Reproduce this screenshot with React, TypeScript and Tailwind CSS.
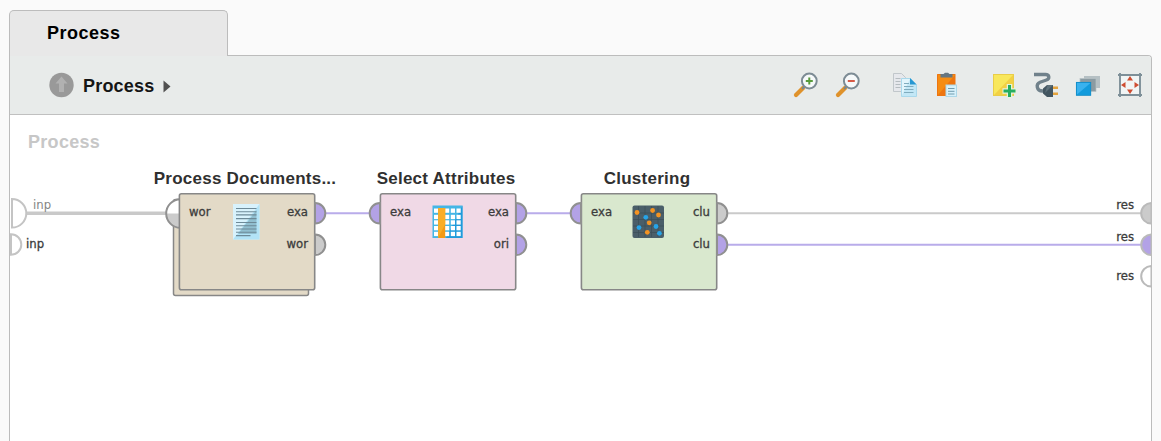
import React from "react";

const VIOLET = "#b3a2e6";
const GRAY = "#cbcbcb";
const EDGE = "#909090";

type PortProps = { x: number; y: number; r?: number; side: "left" | "right"; fill: string; stroke?: string };

function Port({ x, y, r = 10.3, side, fill, stroke = EDGE }: PortProps) {
  const sweep = side === "right" ? 1 : 0;
  return (
    <path
      d={`M${x} ${y - r}A${r} ${r} 0 0 ${sweep} ${x} ${y + r}Z`}
      fill={fill}
      stroke={stroke}
      strokeWidth="2"
    />
  );
}

function PortLabel({ children, muted = false }: { children: React.ReactNode; muted?: boolean }) {
  return (
    <span
      className={`whitespace-nowrap font-['DejaVu_Sans_Condensed','DejaVu_Sans',sans-serif] text-[13px] leading-4 [font-stretch:condensed] ${
        muted ? "text-[#858585]" : "text-[#3c3c3c] [-webkit-text-stroke:0.3px_#3c3c3c]"
      }`}
    >
      {children}
    </span>
  );
}

type OperatorProps = { name: string; inputs: string[]; outputs: string[]; place: string };

function Operator({ name, inputs, outputs, place }: OperatorProps) {
  return (
    <div className={`absolute top-[54px] flex w-[136px] flex-col ${place}`}>
      <h3 className="flex justify-center whitespace-nowrap text-[17px] font-bold leading-5 tracking-[0.25px] text-[#303030]">
        {name}
      </h3>
      <div className="mt-[15px] flex justify-between pl-3 pr-[5px]">
        <div className="flex flex-col gap-4">
          {inputs.map((port, i) => (
            <PortLabel key={i}>{port}</PortLabel>
          ))}
        </div>
        <div className="flex flex-col items-end gap-4">
          {outputs.map((port, i) => (
            <PortLabel key={i}>{port}</PortLabel>
          ))}
        </div>
      </div>
    </div>
  );
}

function ZoomIcon({ plus }: { plus: boolean }) {
  return (
    <svg width="26" height="26" viewBox="0 0 26 26">
      <path d="M3 23L10 16" stroke="#df922b" strokeWidth="4.200" strokeLinecap="round" />
      <path d="M9 17L12 14" stroke="#7b878d" strokeWidth="2" />
      <circle cx="16.300" cy="9" r="7.400" fill="#f6f9fa" stroke="#7d8c95" strokeWidth="2" />
      {plus ? (
        <path d="M12.800 9h7M16.300 5.500v7" stroke="#589b3b" strokeWidth="2" />
      ) : (
        <path d="M12.800 9h7" stroke="#d65a46" strokeWidth="2" />
      )}
    </svg>
  );
}

function CopyIcon() {
  return (
    <svg width="26" height="26" viewBox="0 0 26 26">
      <path d="M1.500 1.500h8l4 4v14h-12z" fill="#e6e8ec" stroke="#c1c7cb" />
      <path d="M3.500 6.500h5M3.500 9.500h5M3.500 12.500h5M3.500 15.500h5" stroke="#b5bcc0" />
      <path d="M9.500 6.500h9l6 6v12h-15z" fill="#c2e7f6" />
      <path d="M10 7h8l-8 16z" fill="#e2f5fc" />
      <path d="M9.500 6.500h9l6 6v12h-15z" fill="none" stroke="#a9d8eb" />
      <path d="M18 6l6.500 6.500H18z" fill="#2697d2" />
      <path d="M12 11.500h5M12 14.500h9.500M12 17.500h9.500M12 20.500h9.500" stroke="#80acbe" strokeWidth="1.200" />
    </svg>
  );
}

function PasteIcon() {
  return (
    <svg width="26" height="26" viewBox="0 0 26 26">
      <rect x="3" y="2" width="18.500" height="22" rx=".5" fill="#ee7510" />
      <path d="M4 3h17L4 23z" fill="#f58c13" />
      <path d="M6.500 2h3l1.500-1.300h3L15.500 2h3v3.500h-12z" fill="#657681" />
      <rect x="12" y="13" width="10.500" height="11.500" fill="#d7f1fb" stroke="#acd7e8" />
      <path d="M14 16.500h6.500M14 19.300h6.500M14 22h6.500" stroke="#719cae" />
    </svg>
  );
}

function NoteIcon() {
  return (
    <svg width="26" height="26" viewBox="0 0 26 26">
      <rect x="2" y="2" width="21" height="22" fill="#f2d044" />
      <path d="M3 3h19L3 23z" fill="#f8e75c" />
      <rect x="2.500" y="2.500" width="20" height="21" fill="none" stroke="#e9cd48" />
      <path d="M18.500 12v14M11.500 19h14" stroke="#e8f2dc" strokeWidth="5.500" />
      <path d="M18.500 13v12M12.500 19h12" stroke="#27ae60" strokeWidth="3" />
    </svg>
  );
}

function PlugIcon() {
  return (
    <svg width="26" height="26" viewBox="0 0 26 26">
      <path
        d="M1 2.500h11.500c4 0 4.500 4.300 1 5.500l-6.500 2.200c-4.500 1.800-3.500 8.800 2.500 8.800h3"
        fill="none"
        stroke="#70818b"
        strokeWidth="3.300"
      />
      <path d="M19 15.700h6M19 21.700h6" stroke="#e5a43d" strokeWidth="2.500" />
      <path d="M10 16.500l4-3.500h6v12h-6l-4-3.500z" fill="#435661" />
      <path d="M14.500 13H20l-8 8z" fill="#5d707a" />
    </svg>
  );
}

function LayersIcon() {
  return (
    <svg width="26" height="26" viewBox="0 0 26 26">
      <rect x="9" y="4" width="16" height="12" fill="#b5c0c4" />
      <rect x="5" y="6.500" width="16" height="13" fill="#8b9ba2" stroke="#b8c2c6" strokeWidth=".7" />
      <rect x="1" y="10" width="15" height="13.500" fill="#129bdc" />
      <path d="M2 11h13.500L2 22.500z" fill="#39b2ee" />
      <rect x="1.300" y="10.300" width="14.500" height="13" fill="none" stroke="#168bc4" strokeWidth=".7" />
    </svg>
  );
}

function FitIcon() {
  return (
    <svg width="26" height="26" viewBox="0 0 26 26">
      <rect x="3" y="3" width="20" height="20" fill="#f1f4f4" />
      <path d="M1 3h24M1 23h24M3 1v24M23 1v24" stroke="#7d8f98" strokeWidth="1.900" />
      <path d="M13 4l3 4.500h-6zM13 22l-3-4.500h6zM4 13l4.500-3v6zM22 13l-4.500 3v-6z" fill="#ce4c31" />
    </svg>
  );
}

function Diagram() {
  return (
    <svg className="block h-full w-full" viewBox="10 115 1141 326" preserveAspectRatio="xMinYMin meet">
      <path d="M27 213.300H166" stroke="#c9c9c9" strokeWidth="3.400" />
      <path d="M326 213.300H370M527 213.300H571" stroke="#b9acea" strokeWidth="2" />
      <path d="M728 213.300H1141" stroke="#cacaca" strokeWidth="2" />
      <path d="M728 244.800H1141" stroke="#b9acea" strokeWidth="2" />

      <Port x={12} y={213.3} r={14.3} side="right" fill="#fff" stroke="#c4c4c4" />
      <Port x={11} y={244.5} side="right" fill="#fff" stroke="#c4c4c4" />
      <Port x={1151.5} y={213.3} side="left" fill={GRAY} stroke="#bababa" />
      <Port x={1151.5} y={244.8} side="left" fill={VIOLET} stroke="#bababa" />
      <Port x={1151.5} y={276.3} side="left" fill="#fff" stroke="#bababa" />

      <rect x="173.500" y="199.500" width="135" height="96" rx="2" fill="#e3dac7" stroke="#878787" strokeWidth="1.500" />
      <circle cx="180.500" cy="213.500" r="14.300" fill="#fff" />
      <path d="M166.200 213.500h14.300v14.300a14.300 14.300 0 0 1-14.300-14.300z" fill={GRAY} />
      <Port x={180.5} y={213.5} r={14.3} side="left" fill="none" />

      <g stroke="#878787" strokeWidth="1.600">
        <rect x="179.400" y="193.700" width="135.300" height="96" rx="2" fill="#e3dac7" />
        <rect x="380.400" y="193.700" width="135.300" height="96" rx="2" fill="#f0d9e6" />
        <rect x="581.400" y="193.700" width="135.300" height="96" rx="2" fill="#d9e8ce" />
      </g>
      <Port x={315} y={213.3} side="right" fill={VIOLET} />
      <Port x={315} y={244.8} side="right" fill={GRAY} />
      <Port x={380} y={213.3} side="left" fill={VIOLET} />
      <Port x={516} y={213.3} side="right" fill={VIOLET} />
      <Port x={516} y={244.8} side="right" fill={VIOLET} />
      <Port x={581} y={213.3} side="left" fill={VIOLET} />
      <Port x={717} y={213.3} side="right" fill={GRAY} />
      <Port x={717} y={244.8} side="right" fill={VIOLET} />

      <g>
        <rect x="233" y="204" width="26.500" height="35.500" fill="#d8f2fc" />
        <path d="M259.500 204v35.500H233z" fill="#b2e3f7" />
        <path d="M256.500 210v24H238z" fill="#91bfd0" />
        <path d="M236 208.500h20.500M236 211.700h20.500M236 214.900h20.500M236 218.600h20.500M236 222.500h20.500M236 225.700h20.500M236 229h20.500M236 232.300h20.500M236 235.600h14.500" stroke="#6d8a98" strokeWidth="1.100" />
      </g>

      <g>
        <rect x="432.500" y="205.500" width="30" height="32.500" fill="#45b6e5" />
        <path d="M462.500 205.500V238H446z" fill="#209bdb" />
        <g fill="#fff">
          {[208.5, 214.8, 220.3, 226, 231.8].map((y) =>
            [434, 445, 450.8, 456.5].map((x) => (
              <rect key={`${x}-${y}`} x={x} y={y} width="4.200" height="4.300" />
            )),
          )}
        </g>
        <rect x="438.200" y="208" width="7" height="30" fill="#f39a15" />
        <path d="M438.200 208h7v16l-7 14z" fill="#faad27" />
      </g>

      <g>
        <rect x="632.500" y="205.500" width="31.500" height="32.500" rx="2" fill="#4a5e69" />
        <path d="M638.500 206v31M645 206v31M651.500 206v31M658 206v31M633 213h31M633 219.500h31M633 226h31M633 232.500h31" stroke="#3b4d57" strokeWidth=".7" />
        <g fill="#f39322">
          <circle cx="637" cy="212.500" r="2.400" />
          <circle cx="652.600" cy="210.500" r="2.400" />
          <circle cx="658.500" cy="215" r="2.400" />
          <circle cx="649.200" cy="222.800" r="2.400" />
          <circle cx="647.300" cy="232.300" r="2.400" />
        </g>
        <g fill="#26a4e8">
          <circle cx="645.800" cy="217.300" r="2.400" />
          <circle cx="656" cy="226.500" r="2.400" />
          <circle cx="639" cy="227.600" r="2.400" />
          <circle cx="659.400" cy="233.300" r="2.400" />
        </g>
      </g>
    </svg>
  );
}

export default function App() {
  return (
    <div className="flex h-[441px] w-[1161px] flex-col overflow-hidden bg-[#fafafa] px-[9px] pt-[10px] font-['Liberation_Sans',Arial,sans-serif]">
      <div className="z-10 -mb-px flex h-[46px] w-[219px] shrink-0 items-center rounded-t-[5px] border border-b-0 border-[#bcbcbc] bg-[#e8e8e8] pl-[37px] text-[18px] font-bold tracking-[0.5px] text-black">
        Process
      </div>
      <div className="flex min-h-0 flex-1 flex-col overflow-hidden rounded-tr-[4px] border border-b-0 border-[#bcbcbc] bg-white">
        <header className="flex h-[59px] shrink-0 items-center justify-between border-b border-[#c0c0c0] bg-[#e8ebea] pl-[39px] pr-2">
          <div className="flex items-center">
            <svg width="25" height="26" viewBox="0 0 25 26">
              <circle cx="12.500" cy="13" r="12.200" fill="#999" />
              <path d="M12.500 4.500l6 7h-3.500V20h-5v-8.500H6.500z" fill="#b1b1b1" />
            </svg>
            <span className="ml-[9px] pt-0.5 text-[18px] font-bold tracking-[0.2px] text-[#151515]">Process</span>
            <svg className="ml-[9px] mt-0.5" width="8" height="13" viewBox="0 0 8 13">
              <path d="M.500.500L7.500 6.500.500 12.500z" fill="#505050" />
            </svg>
          </div>
          <div className="flex items-center">
            <div className="mr-[31px] flex gap-4">
              <ZoomIcon plus />
              <ZoomIcon plus={false} />
            </div>
            <div className="mr-[31px] flex gap-4">
              <CopyIcon />
              <PasteIcon />
            </div>
            <div className="flex gap-4">
              <NoteIcon />
              <PlugIcon />
              <LayersIcon />
              <FitIcon />
            </div>
          </div>
        </header>
        <main className="relative flex min-h-0 flex-1 flex-col">
          <Diagram />
          <h2 className="absolute left-[18px] top-[17px] text-[18px] font-bold leading-5 tracking-[0.3px] text-[#c7c7c7]">
            Process
          </h2>
          <Operator place="left-[167px]" name="Process Documents..." inputs={["wor"]} outputs={["exa", "wor"]} />
          <Operator place="left-[368px]" name="Select Attributes" inputs={["exa"]} outputs={["exa", "ori"]} />
          <Operator place="left-[569px]" name="Clustering" inputs={["exa"]} outputs={["clu", "clu"]} />
          <div className="absolute left-4 top-[82px] flex flex-col gap-[23px]">
            <div className="flex pl-[7px]">
              <PortLabel muted>inp</PortLabel>
            </div>
            <PortLabel>inp</PortLabel>
          </div>
          <div className="absolute right-[17px] top-[82px] flex flex-col">
            <PortLabel>res</PortLabel>
            <div className="flex flex-col gap-[23px] pt-4">
              <PortLabel>res</PortLabel>
              <PortLabel>res</PortLabel>
            </div>
          </div>
        </main>
      </div>
    </div>
  );
}
